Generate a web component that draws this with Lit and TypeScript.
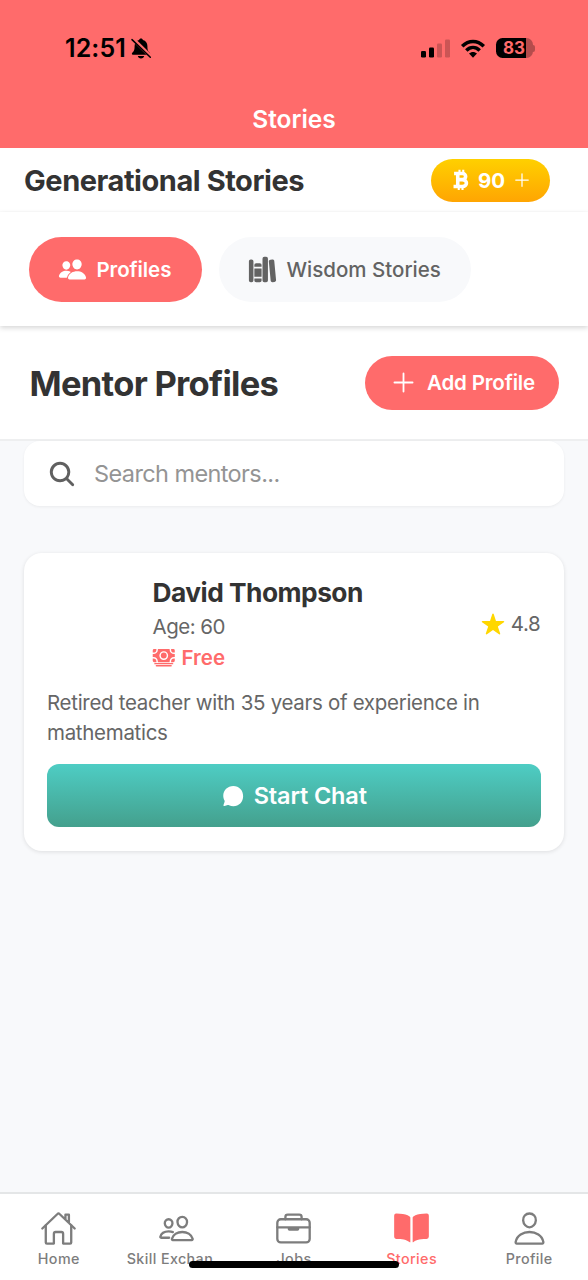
import { LitElement, html, svg, css } from "lit";
import { customElement } from "lit/decorators.js";

const icon = (cls: string, body: unknown, box = "0 0 512 512") =>
  html`<svg class="icon ${cls}" viewBox=${box} aria-hidden="true">${body}</svg>`;

const people = svg`<path d="M336 256c-20.56 0-40.44-9.18-56-25.84-15.13-16.25-24.37-37.92-26-61-1.74-24.62 5.77-47.26 21.14-63.76S312 80 336 80c23.83 0 45.38 9.06 60.7 25.52 15.47 16.62 23 39.22 21.26 63.63-1.67 23.11-10.9 44.77-26 61C376.44 246.82 356.57 256 336 256zM467.83 432H204.18a27.71 27.71 0 01-22-10.67 30.22 30.22 0 01-5.26-25.79c8.42-33.81 29.28-61.85 60.32-81.08C264.79 297.4 299.86 288 336 288c36.85 0 71 9 98.71 26.05 31.11 19.13 52 47.33 60.38 81.55a30.27 30.27 0 01-5.32 25.78A27.68 27.68 0 01467.83 432zM147 260c-35.19 0-66.13-32.72-69-72.93-1.42-20.6 5-39.65 18-53.62 12.86-13.83 31-21.45 51-21.45s38 7.66 50.93 21.57c13.1 14.08 19.5 33.09 18 53.52-2.87 40.2-33.8 72.91-68.93 72.91zM212.66 291.45c-17.59-8.6-40.42-12.9-65.65-12.9-29.46 0-58.07 7.68-80.57 21.62-25.51 15.83-42.67 38.88-49.6 66.71a27.39 27.39 0 004.79 23.36A25.32 25.32 0 0041.72 400h111a8 8 0 007.87-6.57c.11-.63.25-1.26.41-1.88 8.48-34.06 28.35-62.84 57.71-83.82a8 8 0 00-.63-13.39c-1.57-.92-3.37-1.89-5.42-2.89z"/>`;
const library = svg`<path d="M64 480H48a32 32 0 01-32-32V112a32 32 0 0132-32h16a32 32 0 0132 32v336a32 32 0 01-32 32zM240 176a32 32 0 00-32-32h-64a32 32 0 00-32 32v28a4 4 0 004 4h120a4 4 0 004-4zM112 448a32 32 0 0032 32h64a32 32 0 0032-32v-30a2 2 0 00-2-2H114a2 2 0 00-2 2zM114 240h124a2 2 0 012 2v140a2 2 0 01-2 2H114a2 2 0 01-2-2V242a2 2 0 012-2zM320 480h-32a32 32 0 01-32-32V64a32 32 0 0132-32h32a32 32 0 0132 32v384a32 32 0 01-32 32zM495.89 445.45l-32.23-340c-1.48-15.65-16.94-27-34.53-25.31l-31.85 3c-17.59 1.67-30.65 15.71-29.17 31.36l32.23 340c1.48 15.65 16.94 27 34.53 25.31l31.85-3c17.59-1.67 30.65-15.71 29.17-31.36z"/>`;
const search = svg`<path d="M456.69 421.39L362.6 327.3a173.81 173.81 0 0034.84-104.58C397.44 126.38 319.06 48 222.72 48S48 126.38 48 222.72s78.38 174.72 174.72 174.72A173.81 173.81 0 00327.3 362.6l94.09 94.09a25 25 0 0035.3-35.3zM97.92 222.72a124.8 124.8 0 11124.8 124.8 124.95 124.95 0 01-124.8-124.8z"/>`;
const star = svg`<path d="M394 480a16 16 0 01-9.39-3L256 383.76 127.39 477a16 16 0 01-24.55-18.08L153 310.35 23 221.2a16 16 0 019-29.2h160.38l48.4-148.95a16 16 0 0130.44 0l48.4 149H480a16 16 0 019.05 29.2L359 310.35l50.13 148.53A16 16 0 01394 480z"/>`;
const cash = svg`<path d="M448 400H64a16 16 0 010-32h384a16 16 0 010 32zM416 448H96a16 16 0 010-32h320a16 16 0 010 32zM32 272H16v48a32 32 0 0032 32h48v-16a64.07 64.07 0 00-64-64zM480 240h16v-64h-16a96.11 96.11 0 01-96-96V64H128v16a96.11 96.11 0 01-96 96H16v64h16a96.11 96.11 0 0196 96v16h256v-16a96.11 96.11 0 0196-96zM256 304a96 96 0 1196-96 96.11 96.11 0 01-96 96z"/><circle cx="256" cy="208" r="64"/><path d="M416 336v16h48a32 32 0 0032-32v-48h-16a64.07 64.07 0 00-64 64zM480 144h16V96a32 32 0 00-32-32h-48v16a64.07 64.07 0 0064 64zM96 80V64H48a32 32 0 00-32 32v48h16a64.07 64.07 0 0064-64z"/>`;
const chat = svg`<path d="M264 42C140 42 48 133 48 250c0 39 11 74 27 104 5 10 3 19 0 29l-22 66c-4 14 7 25 21 21l70-21c9-3 18-2 27 3 29 15 60 22 93 22 117 0 208-93 208-214C472 133 386 42 264 42z"/>`;
const plus = svg`<path class="line" d="M256 96v320M416 256H96"/>`;
const coin = svg`<g fill="none" stroke="currentColor"><path stroke-width="3.9" d="M1 5h9c4.800 0 4.800 6.600 0 6.600H5.400M10 11.600c6 0 6 7.400 0 7.400H.4M5 5v14"/><path stroke-width="2.300" d="M6.900 .9v4M11 .9v4M6.100 19v4M10.200 19v4"/></g>`;

const home = svg`<g class="line"><path d="M80 212v236a16 16 0 0016 16h96V328a24 24 0 0124-24h80a24 24 0 0124 24v136h96a16 16 0 0016-16V212"/><path d="M480 256L266.89 52c-5-5.28-16.69-5.34-21.78 0L32 256M400 179V64h-48v69"/></g>`;
const peopleOutline = svg`<g class="line"><path d="M402 168c-2.93 40.67-33.1 72-66 72s-63.12-31.32-66-72c-3-42.31 26.37-72 66-72s69 30.46 66 72z"/><path d="M336 304c-65.17 0-127.84 32.37-143.54 95.41-2.08 8.34 3.15 16.59 11.72 16.59h263.65c8.57 0 13.77-8.25 11.72-16.59C463.85 335.36 401.18 304 336 304z"/><path d="M200 185.94c-2.34 32.48-26.72 58.06-53 58.06s-50.7-25.57-53-58.06C91.61 152.15 115.34 128 147 128s55.39 24.77 53 57.94z"/><path d="M206 306c-18.05-8.27-37.93-11.45-59-11.45-52 0-102.1 25.85-114.65 76.2-1.65 6.66 2.53 13.25 9.37 13.25H154"/></g>`;
const briefcase = svg`<g class="line"><rect x="32" y="128" width="448" height="320" rx="48"/><path d="M144 128V96a32 32 0 0132-32h160a32 32 0 0132 32v32M480 240H32M320 240v24a8 8 0 01-8 8H200a8 8 0 01-8-8v-24"/></g>`;
const book = svg`<path d="M202.24 74C166.11 56.75 115.61 48.3 48 48a31.36 31.36 0 00-17.92 5.33A32 32 0 0016 79.9V366c0 19.34 13.76 33.93 32 33.93 71.07 0 142.36 6.64 185.06 47a4.11 4.11 0 006.94-3V106.82a15.89 15.89 0 00-5.46-12A143 143 0 00202.24 74zM481.92 53.3A31.33 31.33 0 00464 48c-67.61.3-118.11 8.71-154.24 26a143.31 143.31 0 00-32.31 20.78 15.93 15.93 0 00-5.45 12v337.13a3.93 3.93 0 006.68 2.81c25.67-25.5 70.72-46.82 185.36-46.81a32 32 0 0032-32v-288a32 32 0 00-14.12-26.61z"/>`;
const person = svg`<g class="line"><path d="M344 144c-3.92 52.87-44 96-88 96s-84.15-43.12-88-96c-4-55 35-96 88-96s92 42 88 96z"/><path d="M256 304c-87 0-175.3 48-191.64 138.6C62.39 453.52 68.57 464 80 464h352c11.44 0 17.62-10.48 15.65-21.4C431.3 352 343 304 256 304z"/></g>`;

const bell = svg`<path d="M11 1.4c1.1 0 1.8.7 1.9 1.7 2.9.8 4.5 3 4.5 6 0 4.200.9 5.500 2.300 6.700.8.8.5 1.900-.6 1.900H2.900c-1.100 0-1.400-1.100-.6-1.900 1.400-1.200 2.300-2.500 2.300-6.700 0-3 1.600-5.200 4.500-6 .1-1 .8-1.700 1.900-1.700zM7.800 19h6.400c-.3 1.500-1.500 2.400-3.200 2.400s-2.900-.9-3.200-2.400z"/><path d="M2.600 1.600L21 19.600" fill="none" stroke="#ff6b6b" stroke-width="3.600"/><path d="M2 2.600l18.300 17.700" fill="none" stroke="currentColor" stroke-width="1.500" stroke-linecap="round"/>`;
const signal = svg`<rect x="0" y="12" width="5" height="6.500" rx="1.300"/><rect x="8" y="8.500" width="5" height="10" rx="1.300"/><g opacity=".2"><rect x="16" y="4.500" width="5" height="14" rx="1.300"/><rect x="24" y=".5" width="5" height="18" rx="1.300"/></g>`;
const wifi = svg`<g fill="none" stroke="currentColor" stroke-width="3.500"><path d="M1.200 7.200c6.500-6.400 15.100-6.400 21.600 0"/><path d="M5.300 11.400c4-3.900 9.400-3.900 13.400 0"/></g><path d="M12 18.800l-4-4.200c2.200-2.100 5.800-2.100 8 0z"/>`;

const tabs = [
  { label: "Home", cls: "t-home", glyph: home },
  { label: "Skill Exchan", cls: "t-skill", glyph: peopleOutline },
  { label: "Jobs", cls: "t-jobs", glyph: briefcase },
  { label: "Stories", cls: "t-stories active", glyph: book },
  { label: "Profile", cls: "t-profile", glyph: person },
];

@customElement("app-root")
export class AppRoot extends LitElement {
  static styles = css`
    :host {
      display: flex; flex-direction: column; position: relative;
      height: 1280px; overflow: hidden; background: #f8f9fb; color: #333;
      font-family: Inter, "Liberation Sans", sans-serif; white-space: nowrap;
    }
    * { box-sizing: border-box; }
    .icon { display: block; flex: none; fill: currentColor; overflow: visible; }
    .line { fill: none; stroke: currentColor; stroke-width: 32; stroke-linecap: round; stroke-linejoin: round; }

    .status { height: 96px; background: #ff6b6b; color: #000; display: flex; align-items: center; padding: 0 53px 0 65px; }
    .time { font-size: 25px; font-weight: 600; letter-spacing: 0.1px; }
    .bell { width: 22px; height: 22px; margin-left: 4px; }
    .sys { margin-left: auto; display: flex; align-items: center; }
    .signal { width: 29px; height: 19px; }
    .wifi { width: 24px; height: 19px; margin-left: 11px; }
    .battery { margin-left: 11px; width: 37px; height: 20px; border-radius: 6.5px; color: #ff6b6b;
      background: linear-gradient(90deg, #000 30px, #b54c4c 30px); font-size: 17px; font-weight: 700;
      display: flex; align-items: center; justify-content: center; padding-right: 1px; }
    .nub { width: 2px; height: 7px; border-radius: 0 2px 2px 0; background: #b54c4c; }

    .nav { height: 52px; padding-bottom: 6px; background: #ff6b6b; color: #fff; display: flex; align-items: center; justify-content: center;
      font-size: 24.5px; font-weight: 600; }
    .top { height: 64px; background: #fff; display: flex; align-items: center; justify-content: space-between;
      padding: 1px 38px 0 24px; border-bottom: 1px solid #fdfdfd; }
    .brand { font-size: 29px; font-weight: 700; letter-spacing: -0.45px; line-height: 40px; padding-top: 2px; }
    .coins { width: 119px; height: 43px; border-radius: 22px; background: linear-gradient(#ffd000, #ffa502); color: #fff;
      display: flex; align-items: center; padding-left: 22px; font-size: 20.5px; font-weight: 700; }
    .coin { width: 15px; height: 22px; }
    .coins .amount { margin-left: 10px; }
    .coins .plus { width: 20px; height: 20px; margin-left: 7px; }

    .segments { height: 114px; background: #fff; padding: 25px 29px; display: flex; gap: 17px; z-index: 2;
      box-shadow: 0 2px 5px rgba(0,0,0,.16); flex: none; }
    .pill { height: 65px; border-radius: 33px; display: flex; align-items: center; padding: 0 29.5px; font-size: 20.5px; font-weight: 500; background: #f8f9fb; color: #636363; }
    .pill.on { background: #ff6b6b; color: #fff; width: 173px; font-weight: 600; letter-spacing: -0.1px; }
    .pill.off { width: 252px; }
    .pill .icon { width: 29px; height: 29px; margin: 0 9.5px 0 -0.5px; }

    .heading { height: 115px; flex: none; background: #fff; border-bottom: 2px solid #eeeff0; padding: 0 29px 0 29.5px; display: flex; align-items: center; justify-content: space-between; }
    .title { font-size: 34.5px; font-weight: 700; letter-spacing: -0.7px; padding-top: 2px; }
    .add { width: 194px; height: 54px; border-radius: 27px; background: #ff6b6b; color: #fff; font-size: 20.5px; font-weight: 600; letter-spacing: -0.15px; display: flex; align-items: center; padding-left: 24px; }
    .add .plus { width: 29px; height: 29px; margin-right: 9px; }

    .content { flex: 1; padding: 0 24px 0 23.5px; }
    .search { height: 65px; background: #fff; border-radius: 16px; box-shadow: 0 1px 3px rgba(0,0,0,.06); display: flex; align-items: center; padding-left: 23.5px; color: #949494; font-size: 23.5px; letter-spacing: -0.6px; }
    .search .icon { width: 30px; height: 30px; color: #606060; margin-right: 17px; }
    .card { height: 298px; margin-top: 47px; background: #fff; border-radius: 18px; padding: 24px 23.5px; box-shadow: 0 1px 4px rgba(0,0,0,.11); }
    .who { display: flex; height: 97px; padding-left: 105.5px; justify-content: space-between; }
    .facts { display: flex; flex-direction: column; }
    .name { font-size: 26.3px; font-weight: 700; line-height: 32px; letter-spacing: -0.5px; }
    .age { font-size: 20.5px; line-height: 36px; color: #666; letter-spacing: -0.5px; }
    .fee { display: flex; align-items: center; color: #ff6b6b; font-size: 20.5px; line-height: 26px; font-weight: 600; }
    .cash { width: 23.5px; height: 23.5px; margin: 0 6px 0 -0.5px; }
    .rating { display: flex; align-items: center; height: 93px; color: #666; font-size: 20.5px; letter-spacing: -0.3px; }
    .star { width: 24px; height: 24px; color: #ffd700; margin-right: 6px; }
    .bio { color: #666; font-size: 20.5px; line-height: 29.5px; margin-top: 14px; letter-spacing: -0.3px; }
    .chat { height: 63px; margin-top: 17px; border-radius: 12px; background: linear-gradient(#4ecdc4, #44a08d); color: #fff; display: flex; align-items: center; justify-content: center; font-size: 23.5px; font-weight: 600; letter-spacing: -0.15px; }
    .bubble { width: 24px; height: 24px; margin-right: 9px; }

    .tabbar { height: 88px; background: #fff; border-top: 2px solid #e4e6e7; display: grid; grid-template-columns: repeat(5, 1fr); padding-top: 16px; }
    .tab { display: flex; flex-direction: column; align-items: center; color: #7d7d7d; font-size: 14.3px; font-weight: 500; line-height: 20px; letter-spacing: .4px; }
    .tab .icon { width: 37px; height: 37px; margin-bottom: 2px; }
    .t-skill span { margin-right: 13px; }
    .tab.active { color: #ff6b6b; }
    .indicator { position: absolute; left: 189px; bottom: 12px; width: 210px; height: 7px; border-radius: 4px; background: #000; }
  `;

  render() {
    return html`
      <div class="status">
        <span class="time">12:51</span>${icon("bell", bell, "0 0 22 22")}
        <div class="sys">
          ${icon("signal", signal, "0 0 29 19")}${icon("wifi", wifi, "0 0 24 19")}
          <span class="battery">83</span><span class="nub"></span>
        </div>
      </div>
      <div class="nav"><span>Stories</span></div>
      <header class="top">
        <span class="brand">Generational Stories</span>
        <div class="coins">${icon("coin", coin, "0 0 16 24")}<span class="amount">90</span>${icon("plus", plus)}</div>
      </header>
      <div class="segments">
        <div class="pill on">${icon("", people)}<span>Profiles</span></div>
        <div class="pill off">${icon("", library)}<span>Wisdom Stories</span></div>
      </div>
      <div class="heading">
        <span class="title">Mentor Profiles</span>
        <div class="add">${icon("plus", plus)}<span>Add Profile</span></div>
      </div>
      <main class="content">
        <div class="search">${icon("", search)}<span>Search mentors...</span></div>
        <article class="card">
          <div class="who">
            <div class="facts">
              <span class="name">David Thompson</span>
              <span class="age">Age: 60</span>
              <span class="fee">${icon("cash", cash)}<span>Free</span></span>
            </div>
            <div class="rating">${icon("star", star)}<span>4.8</span></div>
          </div>
          <div class="bio">Retired teacher with 35 years of experience in<br />mathematics</div>
          <div class="chat">${icon("bubble", chat)}<span>Start Chat</span></div>
        </article>
      </main>
      <nav class="tabbar">
        ${tabs.map((t) => html`<div class="tab ${t.cls}">${icon("", t.glyph)}<span>${t.label}</span></div>`)}
      </nav>
      <div class="indicator"></div>
    `;
  }
}
